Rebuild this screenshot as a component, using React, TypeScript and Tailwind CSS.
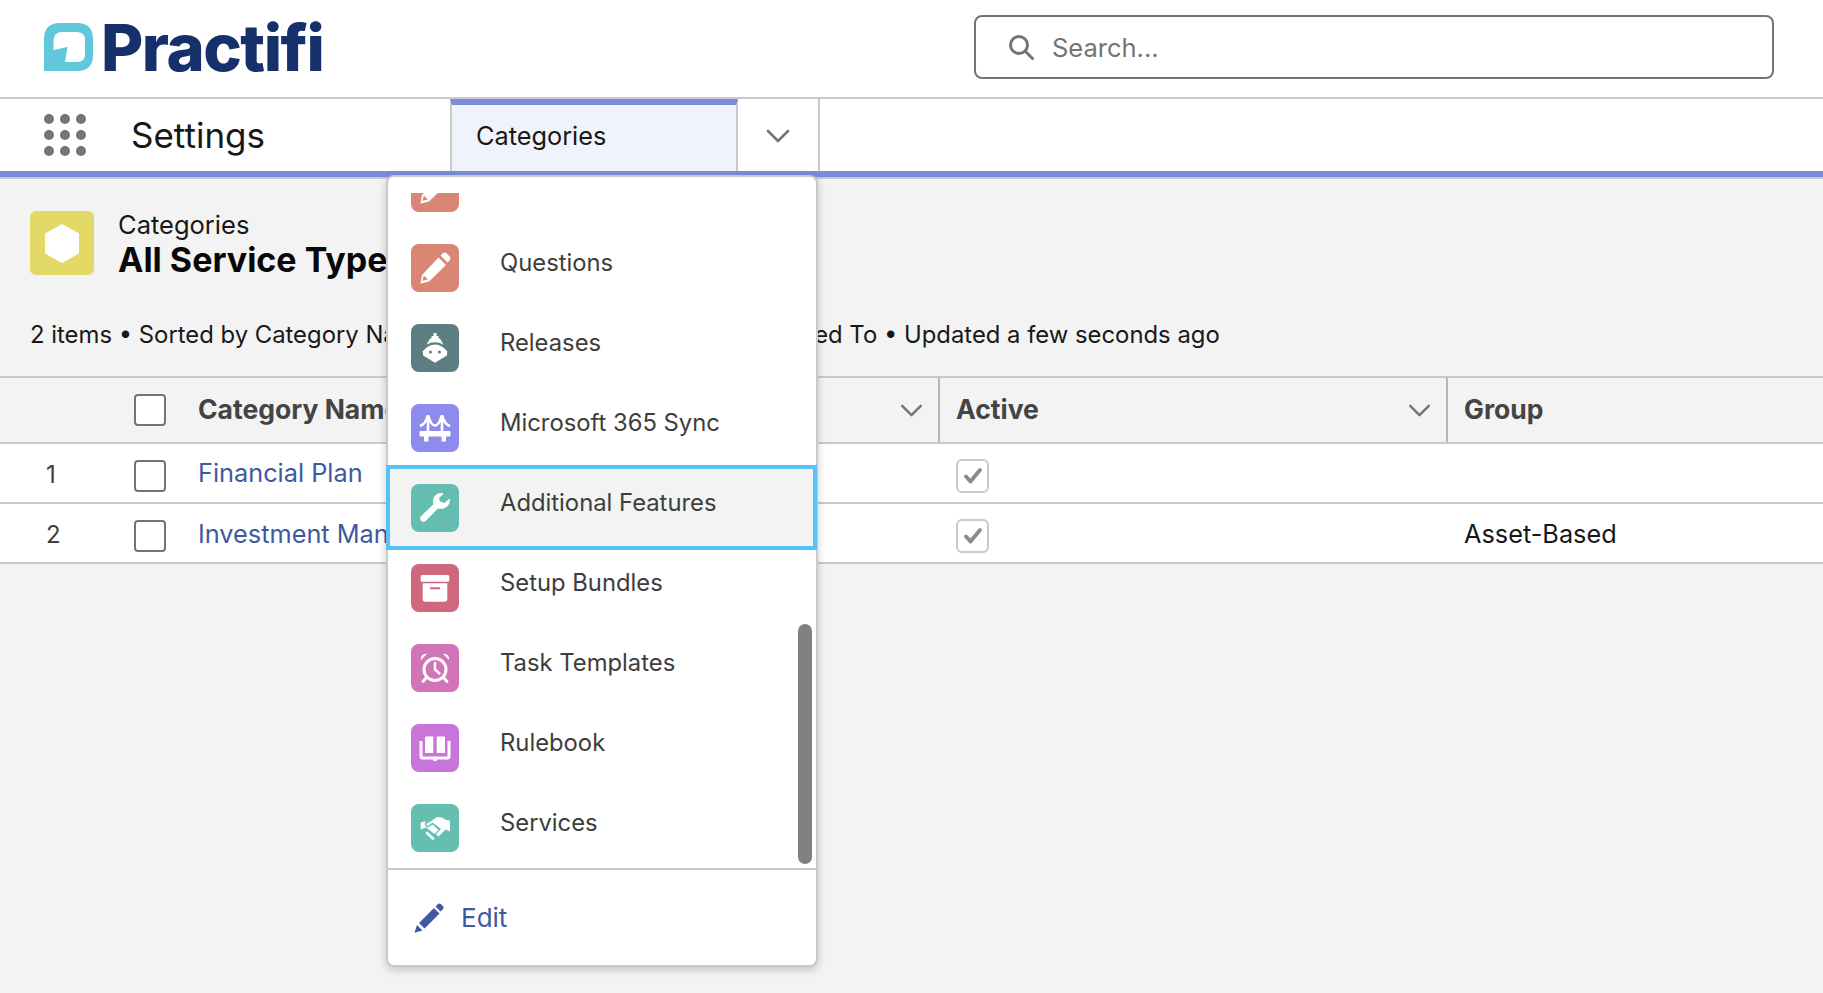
import React from 'react';

const Chevron = ({ className }: { className: string }) => (
  <svg viewBox="0 0 24 14" className={className} fill="none" stroke="currentColor" strokeWidth="2.6" strokeLinecap="round" strokeLinejoin="round">
    <path d="M2 2l10 10L22 2" />
  </svg>
);

const Checkbox = () => (
  <div className="w-[32px] h-[32px] bg-white border-2 border-[#747474] rounded-[4px]" />
);

const ActiveCheck = () => (
  <div className="w-[33px] h-[34px] bg-white border-2 border-[#c9c9c9] rounded-[6px] flex items-center justify-center">
    <svg viewBox="0 0 20 18" className="w-[20px] h-[18px]" fill="none" stroke="#8a8a8a" strokeWidth="3.8" strokeLinecap="round" strokeLinejoin="round">
      <path d="M3 9.5l4.5 5L17 3" />
    </svg>
  </div>
);

const IconBox = ({ color, children }: { color: string; children?: React.ReactNode }) => (
  <div className={`w-[48px] h-[48px] rounded-[8px] shrink-0 ${color}`}>
    <svg viewBox="0 0 48 48" className="w-[48px] h-[48px]" fill="white">
      {children}
    </svg>
  </div>
);

const PencilGlyph = ({ tip }: { tip: string }) => (
  <>
    <path d="M27.5 13.5l7.5 7.5L18 37.5l-8.5 2.2L11 31z" />
    <path d="M29.5 11.5l2-2c1.2-1.2 3-1.2 4.2 0l2.8 2.8c1.2 1.2 1.2 3 0 4.2l-1.9 1.9z" />
    <path d="M12.8 31.5l4 4-5.2 1.3z" fill={tip} />
  </>
);

const menuItems = [
  {
    label: '',
    color: 'bg-[#d98674]',
    glyph: <PencilGlyph tip="#d98674" />,
  },
  {
    label: 'Questions',
    color: 'bg-[#d98674]',
    glyph: <PencilGlyph tip="#d98674" />,
  },
  {
    label: 'Releases',
    color: 'bg-[#5c7d82]',
    glyph: (
      <>
        <path d="M22.5 9h3v3h2v2.5H29l3.5 6.2c-2.5-1.7-5.5-2.5-8.5-2.5s-6 .8-8.5 2.5L19 14.5h1.5V12h2z" />
        <path d="M24 20.5c5 0 9 3 12.3 7l-.5 4L24 38.8l-11.800-7.300-.5-4c3.300-4 7.300-7 12.300-7z" />
        <circle cx="19.5" cy="28" r="1.5" fill="#5c7d82" />
        <circle cx="28.5" cy="28" r="1.5" fill="#5c7d82" />
      </>
    ),
  },
  {
    label: 'Microsoft 365 Sync',
    color: 'bg-[#8e8bec]',
    glyph: (
      <>
        <path d="M17 11v17M31 11v17M17.5 12c1.5 6 4 9.5 6.5 9.5s5-3.5 6.5-9.5M16.5 12c-1 5-3.5 8.5-7.5 10M31.5 12c1 5 3.5 8.5 7.5 10" fill="none" stroke="white" strokeWidth="2.6" />
        <rect x="8.5" y="27" width="31" height="5.5" rx="0.8" />
        <rect x="13" y="32" width="4.5" height="5.5" />
        <rect x="30.5" y="32" width="4.5" height="5.5" />
      </>
    ),
  },
  {
    label: 'Additional Features',
    color: 'bg-[#64bdb0]',
    selected: true,
    glyph: (
      <path d="M31.5 9c-5.5-.6-10 3.5-9.5 9l.5 2.2L10.200 32a3.300 3.300 0 0 0 4.700 4.700L27 24.500c6.500 1.500 12-2.500 12-9l-.5-1-5 4.500-4.500-1.500-1-3.500 3.800-3.600c.3-.5.1-1.300-.3-1.400z" />
    ),
  },
  {
    label: 'Setup Bundles',
    color: 'bg-[#cf677f]',
    glyph: (
      <>
        <rect x="9.7" y="11" width="28.6" height="6.7" rx="1.5" />
        <path d="M11.7 19.3h24.6V35a2.700 2.700 0 0 1-2.700 2.700H14.400a2.700 2.700 0 0 1-2.700-2.700z" />
        <rect x="19" y="23.3" width="10" height="2" rx="0.5" fill="#cf677f" />
      </>
    ),
  },
  {
    label: 'Task Templates',
    color: 'bg-[#d274b8]',
    glyph: (
      <>
        <circle cx="24" cy="25.5" r="11" fill="none" stroke="white" strokeWidth="3" />
        <path d="M24 19v6.5l4.5 4" fill="none" stroke="white" strokeWidth="2.4" strokeLinecap="round" strokeLinejoin="round" />
        <path d="M10 16c-.8-3.5 2-6.5 6-6.2zM38 16c.8-3.5-2-6.5-6-6.2z" />
        <path d="M15 34l-3 3.5M33 34l3 3.5" fill="none" stroke="white" strokeWidth="2.8" strokeLinecap="round" />
      </>
    ),
  },
  {
    label: 'Rulebook',
    color: 'bg-[#c974da]',
    glyph: (
      <>
        <path d="M14 13.5a1 1 0 0 1 1-1h7.300v16.500H14zM25.700 12.500H33a1 1 0 0 1 1 1V29h-8.300z" />
        <path d="M10 17v15.5a1.500 1.500 0 0 0 1.500 1.500h25a1.500 1.500 0 0 0 1.500-1.500V17" fill="none" stroke="white" strokeWidth="3" />
        <rect x="22" y="34" width="4" height="3" rx="1" />
      </>
    ),
  },
  {
    label: 'Services',
    color: 'bg-[#64bfb0]',
    glyph: (
      <>
        <path d="M19 18l7-5 5 .5 4 2.500 4 .5v11l-4.500-2-7 7-2.500-2.500 5-5-8.500-6.500-4 3c-1.500 1-3-.5-2-2z" />
        <path d="M9.700 18.500l4.800-1.500c-1.500 3-.5 6 2.500 6.500l4.500-3 6 5.500-4 4-8.500-6.500-5.300 2z" />
        <path d="M16 29l6 5.500" fill="none" stroke="white" strokeWidth="2.6" strokeLinecap="round" />
      </>
    ),
  },
];

const App: React.FC = () => {
  return (
    <div className="relative w-full h-[993px] overflow-hidden flex flex-col bg-[#f3f3f3] text-[#181818] [font-family:Inter,sans-serif]">
      {/* top bar */}
      <header className="h-[97px] bg-white flex items-center justify-between pl-[44px] pr-[49px] pb-[3px] shrink-0">
        <div className="flex items-center gap-[8px]">
          <svg viewBox="0 0 49 48" className="w-[49px] h-[48px]">
            <path
              fill="#5fc8da"
              fillRule="evenodd"
              d="M0 48V16Q0 0 16 0H33Q49 0 49 16V32Q49 48 33 48ZM9.500 18V27L23.500 24 21 39H33Q41 39 41 31V17Q41 9 32 9H18Q9.500 9 9.500 18Z"
            />
          </svg>
          <span className="text-[65px] leading-none font-extrabold tracking-[-1.5px] text-[#16306b]">Practifi</span>
        </div>
        <div className="w-[800px] h-[64px] border-2 border-[#747474] rounded-[8px] bg-white flex items-center pl-[32px] gap-[18px] text-[#747474]">
          <svg viewBox="0 0 26 26" className="w-[26px] h-[26px]" fill="none" stroke="currentColor" strokeWidth="3" strokeLinecap="round">
            <circle cx="11" cy="11" r="8.5" />
            <path d="M17.5 17.5L24.5 24.5" />
          </svg>
          <span className="text-[25.5px] mt-[2px]">Search...</span>
        </div>
      </header>

      {/* nav bar */}
      <nav className="h-[80px] bg-white flex border-t-2 border-t-[#c9c9c9] border-b-[6px] border-b-[#7b8cdd] shrink-0 relative">
        <div className="w-[450px] flex items-center pl-[44px]">
          <div className="grid grid-cols-3 gap-[6px]">
            {Array.from({ length: 9 }).map((_, i) => (
              <div key={i} className="w-[10px] h-[10px] rounded-full bg-[#747474]" />
            ))}
          </div>
          <span className="ml-[45px] text-[35px] text-[#181818]">Settings</span>
        </div>
        <div className="w-[288px] bg-[#f0f3fb] border-t-[6px] border-t-[#7b8cdd] border-x-2 border-x-[#c9c9c9] flex items-center pl-[24px]">
          <span className="text-[25.3px] text-[#181818] -mt-[4px]">Categories</span>
        </div>
        <div className="w-[82px] border-r-2 border-r-[#c9c9c9] flex items-center justify-center text-[#747474]">
          <Chevron className="w-[24px] h-[14px] mt-[2px]" />
        </div>
      </nav>
      <div className="h-[2px] bg-[#c9c9c9] shrink-0" />

      {/* page head */}
      <section className="pt-[32px] pl-[30px] flex gap-[24px] items-start">
        <div className="w-[64px] h-[64px] rounded-[6px] bg-[#e3d967] flex items-center justify-center">
          <svg viewBox="0 0 34 39" className="w-[34px] h-[39px]" fill="white">
            <path d="M17 0L34 9.5V29.5L17 39L0 29.5V9.5Z" />
          </svg>
        </div>
        <div className="flex flex-col">
          <span className="text-[25.5px] leading-[28px]">Categories</span>
          <span className="text-[34px] leading-[42px] font-bold text-[#080808] whitespace-nowrap">All Service Types</span>
        </div>
      </section>
      <div className="pl-[30px] mt-[36px] text-[23.85px] leading-[36px] whitespace-nowrap">
        2 items • Sorted by Category Name • Filtered by All services - Assigned To • Updated a few seconds ago
      </div>

      {/* table */}
      <div className="mt-[23px] border-t-2 border-[#c9c9c9]">
        <div className="grid grid-cols-[134px_64px_740px_508px_1fr] h-[66px] border-b-2 border-[#c9c9c9] text-[26.5px] font-bold text-[#444444]">
          <div />
          <div className="flex items-center"><Checkbox /></div>
          <div className="flex items-center justify-between pr-[15px] whitespace-nowrap">
            <span>Category Name</span>
            <Chevron className="w-[23px] h-[13px] text-[#747474]" />
          </div>
          <div className="flex items-center justify-between border-l-2 border-[#b5b5b5] pl-[16px] pr-[15px]">
            <span>Active</span>
            <Chevron className="w-[23px] h-[13px] text-[#747474]" />
          </div>
          <div className="flex items-center border-l-2 border-[#b5b5b5] pl-[16px]">Group</div>
        </div>
        <div className="grid grid-cols-[134px_64px_740px_508px_1fr] h-[60px] border-b-2 border-[#c9c9c9] bg-white text-[25.3px]">
          <div className="flex items-center pl-[46px] pt-[3px] text-[24px] text-[#3e3e3c]">1</div>
          <div className="flex items-center pt-[6px]"><Checkbox /></div>
          <div className="flex items-center text-[#3e5a9f]">Financial Plan</div>
          <div className="flex items-center pl-[18px] pt-[5px]"><ActiveCheck /></div>
          <div />
        </div>
        <div className="grid grid-cols-[134px_64px_740px_508px_1fr] h-[60px] border-b-2 border-[#c9c9c9] bg-white text-[25.3px]">
          <div className="flex items-center pl-[46px] pt-[3px] text-[24px] text-[#3e3e3c]">2</div>
          <div className="flex items-center pt-[6px]"><Checkbox /></div>
          <div className="flex items-center text-[#3e5a9f] whitespace-nowrap pt-[2px]">Investment Management</div>
          <div className="flex items-center pl-[18px] pt-[5px]"><ActiveCheck /></div>
          <div className="flex items-center pl-[18px] pt-[2px]">Asset-Based</div>
        </div>
      </div>

      {/* open nav dropdown */}
      <div className="absolute left-[386px] top-[175px] w-[432px] h-[792px] bg-white border-2 border-[#c9c9c9] rounded-[8px] shadow-[0_3px_8px_rgba(0,0,0,0.2)] flex flex-col z-10">
        <div className="h-[16px] shrink-0" />
        <div className="h-[675px] overflow-x-visible overflow-y-clip shrink-0">
          <div className="-mt-[45px]">
            {menuItems.map((item, i) => (
              <div
                key={i}
                className={`relative h-[80px] flex items-center pl-[23px] gap-[41px] ${item.selected ? 'bg-[#f3f3f3]' : ''}`}
              >
                <IconBox color={item.color}>{item.glyph}</IconBox>
                {item.label && <span className="text-[23.8px] text-[#3e3e3c] mb-[11px]">{item.label}</span>}
                {item.selected && (
                  <div className="absolute -top-[3px] -bottom-[2px] -left-[2px] -right-[1px] border-[4px] border-[#56c2f8]" />
                )}
              </div>
            ))}
          </div>
        </div>
        <div className="h-[2px] bg-[#c9c9c9] shrink-0" />
        <div className="flex-1 flex items-center pl-[26px] gap-[17px] text-[#3e5a9f]">
          <svg viewBox="0 0 30 30" className="w-[30px] h-[30px]" fill="#4059a0">
            <path d="M.5 29.7L3 22l5.5 5.5zM5 20L20 5l5.5 5.5-15 15zM21.5 3.5L24 1c.8-.8 2-.8 2.8 0L29 3.2c.8.8.8 2 0 2.8l-2.5 2.5z" />
          </svg>
          <span className="text-[26px] mb-[1px]">Edit</span>
        </div>
        <div className="absolute left-[410px] top-[447px] w-[14px] h-[240px] rounded-full bg-[#808080]" />
      </div>
    </div>
  );
};

export default App;
